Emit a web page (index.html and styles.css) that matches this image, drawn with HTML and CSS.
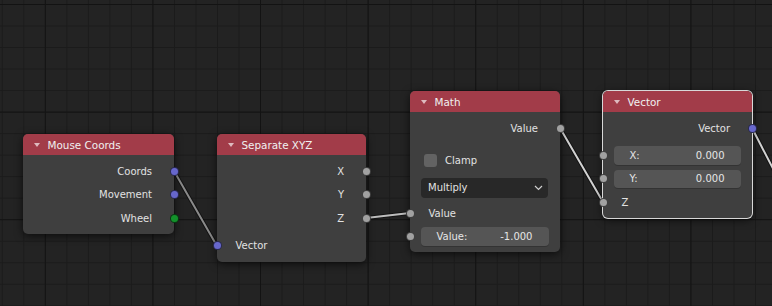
FILE: index.html
```html
<!DOCTYPE html>
<html>
<head>
<meta charset="utf-8">
<link rel="stylesheet" href="styles.css">
</head>
<body>
<div class="canvas">
  <svg class="grid" width="772" height="306" shape-rendering="crispEdges">
    <defs>
      <pattern id="minor" width="21.52" height="21.52" patternUnits="userSpaceOnUse" x="1.8" y="4">
        <rect x="0" y="0" width="1" height="21.52" fill="#1b1b1b"/>
        <rect x="0" y="0" width="21.52" height="1" fill="#1b1b1b"/>
      </pattern>
      <pattern id="major" width="107.6" height="107.6" patternUnits="userSpaceOnUse" x="44.8" y="4">
        <rect x="0" y="0" width="1" height="107.6" fill="#131313"/>
        <rect x="0" y="0" width="107.6" height="1" fill="#131313"/>
      </pattern>
    </defs>
    <rect width="772" height="306" fill="#232323"/>
    <rect width="772" height="306" fill="url(#minor)"/>
    <rect width="772" height="306" fill="url(#major)"/>
  </svg>

  <svg class="wires" width="772" height="306">
    <g stroke-linecap="round" fill="none">
      <line x1="174" y1="171" x2="217" y2="246" stroke="#000" stroke-opacity="0.45" stroke-width="4"/>
      <line x1="174" y1="171" x2="217" y2="246" stroke="#8a8a8a" stroke-width="2"/>
      <line x1="366" y1="218" x2="410" y2="213" stroke="#000" stroke-opacity="0.45" stroke-width="4"/>
      <line x1="366" y1="218" x2="410" y2="213" stroke="#bdbdbd" stroke-width="2"/>
      <line x1="560" y1="128" x2="603" y2="202" stroke="#000" stroke-opacity="0.45" stroke-width="4"/>
      <line x1="560" y1="128" x2="603" y2="202" stroke="#d2d2d2" stroke-width="2"/>
      <line x1="752" y1="128" x2="782" y2="186" stroke="#000" stroke-opacity="0.45" stroke-width="4"/>
      <line x1="752" y1="128" x2="782" y2="186" stroke="#d2d2d2" stroke-width="2"/>
    </g>
  </svg>

  <div class="node n-mouse">
    <div class="head"><span class="tri"></span>Mouse Coords</div>
    <div class="body">
      <div class="row out">Coords<span class="sock vec"></span></div>
      <div class="row out">Movement<span class="sock vec"></span></div>
      <div class="row out">Wheel<span class="sock int"></span></div>
    </div>
  </div>

  <div class="node n-sep">
    <div class="head"><span class="tri"></span>Separate XYZ</div>
    <div class="body">
      <div class="row out">X<span class="sock val"></span></div>
      <div class="row out">Y<span class="sock val"></span></div>
      <div class="row out">Z<span class="sock val"></span></div>
      <div class="row in gap">Vector<span class="sock vec"></span></div>
    </div>
  </div>

  <div class="node n-math">
    <div class="head"><span class="tri"></span>Math</div>
    <div class="body">
      <div class="row out">Value<span class="sock val"></span></div>
      <div class="row check"><span class="box"></span>Clamp</div>
      <div class="select">
        <span>Multiply</span>
        <svg class="chev" width="9" height="6" viewBox="0 0 9 6"><path d="M1 1 L4.5 4.5 L8 1" stroke="#cfcfcf" stroke-width="1.2" fill="none"/></svg>
      </div>
      <div class="row in r-label">Value<span class="sock val"></span></div>
      <div class="fieldrow f-math">
        <span class="sock val"></span>
        <div class="field"><span>Value:</span><span>-1.000</span></div>
      </div>
    </div>
  </div>

  <div class="node n-vec">
    <div class="head"><span class="tri"></span>Vector</div>
    <div class="body">
      <div class="row out">Vector<span class="sock vec"></span></div>
      <div class="fieldrow f-x">
        <span class="sock val"></span>
        <div class="field"><span>X:</span><span>0.000</span></div>
      </div>
      <div class="fieldrow f-y">
        <span class="sock val"></span>
        <div class="field"><span>Y:</span><span>0.000</span></div>
      </div>
      <div class="row in r-z">Z<span class="sock val"></span></div>
    </div>
  </div>
</div>
</body>
</html>
```

FILE: styles.css
```css
html, body {
  margin: 0;
  padding: 0;
  background: #232323;
}

.canvas {
  position: relative;
  width: 772px;
  height: 306px;
  overflow: hidden;
  font-family: "DejaVu Sans", "Liberation Sans", sans-serif;
  font-size: 10px;
  color: #e2e2e2;
}

.grid, .wires {
  position: absolute;
  left: 0;
  top: 0;
}

.node {
  position: absolute;
  background: #3f3f3f;
  border-radius: 5px;
  box-shadow: 0 2px 9px rgba(0, 0, 0, 0.65);
}

.n-mouse { left: 23px; top: 134px; width: 151px; }
.n-sep { left: 217px; top: 134px; width: 149px; }
.n-math { left: 410px; top: 91px; width: 150px; }
.n-vec {
  left: 603px;
  top: 91px;
  width: 149px;
  box-shadow: 0 0 0 1px #d8d8d8, 0 2px 9px rgba(0, 0, 0, 0.65);
}

.head {
  height: 21px;
  background: #a23c49;
  border-radius: 5px 5px 0 0;
  display: flex;
  align-items: center;
  padding-left: 10.5px;
  color: #f0f0f0;
  font-size: 10.4px;
}

.tri {
  width: 0;
  height: 0;
  border-left: 3px solid transparent;
  border-right: 3px solid transparent;
  border-top: 4.5px solid rgba(255, 255, 255, 0.65);
  margin-right: 8px;
}

.body {
  padding: 4.5px 0 4px;
}

.n-math .body { padding-bottom: 6px; }
.n-vec .body { padding-bottom: 5.7px; }

.row {
  position: relative;
  height: 23.5px;
  display: flex;
  align-items: center;
  padding: 0 22px 0 18.5px;
  white-space: nowrap;
}

.row.out { justify-content: flex-end; }
.row.gap { margin-top: 4px; }

.sock {
  position: absolute;
  top: 50%;
  width: 7px;
  height: 7px;
  margin-top: -4.5px;
  border: 1px solid rgba(0, 0, 0, 0.6);
  border-radius: 50%;
}

.out .sock { right: -4.5px; }
.in .sock, .fieldrow .sock { left: -4.5px; }

.vec { background: #6767cc; }
.val { background: #a1a1a1; }
.int { background: #13922b; }

.check {
  margin-top: 10px;
  height: 20px;
  padding-left: 14px;
}

.box {
  width: 13px;
  height: 13px;
  border-radius: 3px;
  background: #636363;
  margin-right: 8px;
}

.select {
  margin: 8px 12px 0 11px;
  height: 19.5px;
  background: #282828;
  border-radius: 4px;
  display: flex;
  align-items: center;
  justify-content: space-between;
  padding: 0 5px 0 7px;
}

.chev { display: block; }

.r-label {
  margin-top: 5.5px;
  height: 20px;
}

.fieldrow {
  position: relative;
  padding: 0 11.5px 0 11px;
}

.f-math { margin-top: 4px; }
.f-x { margin-top: 6px; }
.f-y { margin-top: 5px; }

.field {
  height: 19px;
  background: #555555;
  border-radius: 4px;
  display: flex;
  align-items: center;
  justify-content: space-between;
  padding: 0 16px 0 15.5px;
  box-shadow: 0 1px 0 rgba(0, 0, 0, 0.18);
  color: #e6e6e6;
}

.f-x .field, .f-y .field { height: 18.5px; }

.r-z {
  margin-top: 4px;
  height: 20px;
}
```
